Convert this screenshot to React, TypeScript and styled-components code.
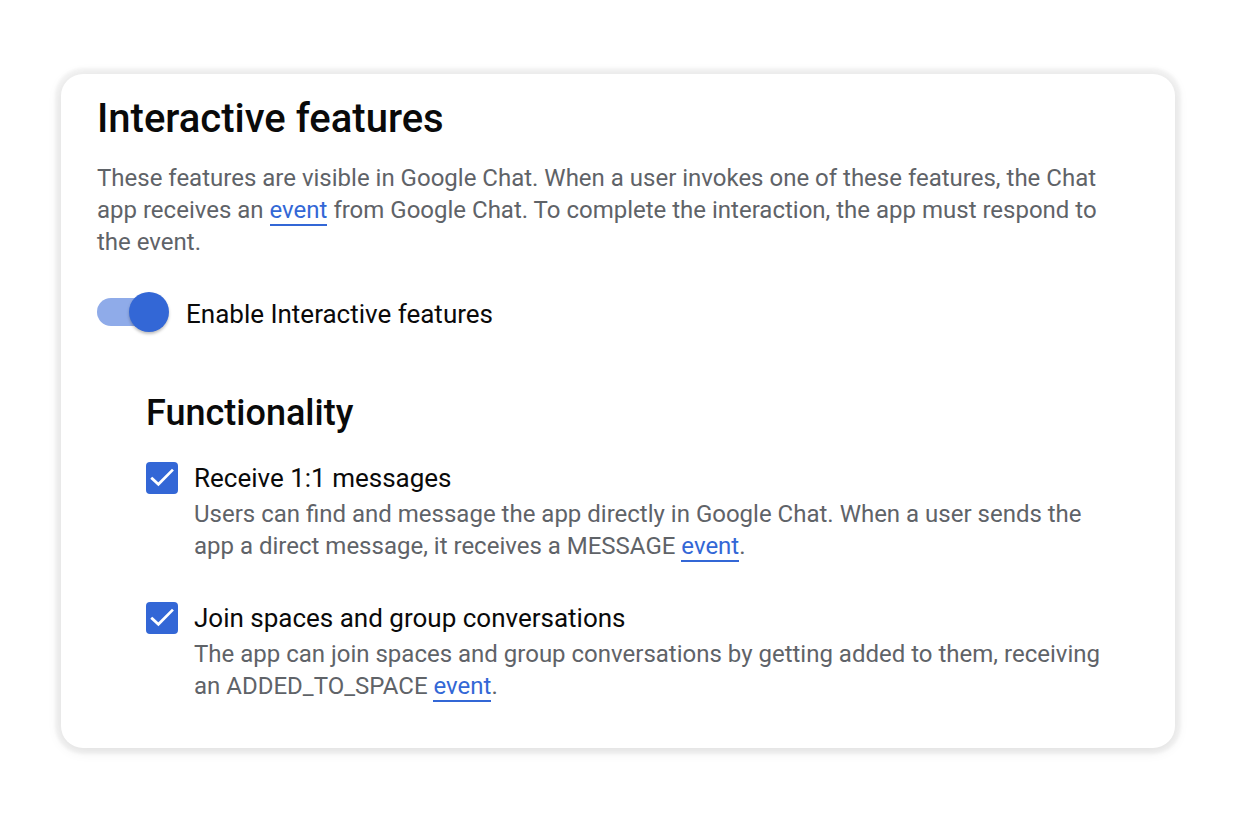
import React from "react";
import styled, { createGlobalStyle } from "styled-components";

const Global = createGlobalStyle`
  html, body { margin: 0; padding: 0; background: #ffffff; }
  body { font-family: Roboto, "Noto Sans", Arial, sans-serif; -webkit-font-smoothing: antialiased; }
`;

const Page = styled.div`
  width: 1243px;
  height: 815px;
  box-sizing: border-box;
  padding: 74px 0 0 61px;
`;

const Card = styled.section`
  width: 1114px;
  height: 674px;
  box-sizing: border-box;
  background: #fff;
  border-radius: 22px;
  box-shadow: 0 0 3px 6px rgba(0, 0, 0, 0.04), 0 2px 14px rgba(0, 0, 0, 0.1);
  padding: 21px 36px 0 36px;
`;

const Title = styled.h1`
  margin: 0;
  font-size: 40px;
  line-height: 48px;
  font-weight: 500;
  color: #0a0a0a;
`;

const Body = styled.p`
  margin: 0;
  font-size: 24px;
  line-height: 32px;
  color: #5f6368;
  font-weight: 400;
`;

const Intro = styled(Body)`
  margin-top: 19px;
`;

const Link = styled.a`
  color: #3367d6;
  text-decoration: none;
  border-bottom: 2px solid #3367d6;
`;

const ToggleRow = styled.label`
  display: flex;
  align-items: center;
  gap: 17px;
  margin-top: 34px;
  font-size: 26px;
  line-height: 32px;
  color: #0a0a0a;
`;

const ToggleText = styled.span`
  padding-top: 3px;
`;

const Switch = styled.span`
  position: relative;
  width: 72px;
  height: 40px;
  display: inline-block;
  flex: none;
`;

const Track = styled.span`
  position: absolute;
  left: 0;
  top: 6px;
  width: 60px;
  height: 28px;
  border-radius: 14px;
  background: #8fabe9;
`;

const Thumb = styled.span`
  position: absolute;
  left: 32px;
  top: 0;
  width: 40px;
  height: 40px;
  border-radius: 50%;
  background: #3367d6;
  box-shadow: 0 2px 3px rgba(0, 0, 0, 0.25);
`;

const Section = styled.div`
  padding-left: 49px;
  margin-top: 59px;
`;

const SubTitle = styled.h2`
  margin: 0;
  font-size: 36px;
  line-height: 44px;
  font-weight: 500;
  color: #0a0a0a;
`;

const List = styled.div`
  display: flex;
  flex-direction: column;
  gap: 40px;
  margin-top: 27px;
`;

const Item = styled.div`
  display: grid;
  grid-template-columns: 32px 1fr;
  column-gap: 16px;
`;

const Box = styled.span`
  width: 32px;
  height: 32px;
  border-radius: 4px;
  background: #3367d6;
  display: flex;
  align-items: center;
  justify-content: center;
`;

const ItemText = styled.div`
  display: flex;
  flex-direction: column;
  gap: 4px;
`;

const ItemLabel = styled.div`
  font-size: 26px;
  line-height: 32px;
  color: #0a0a0a;
`;

const Check = () => (
  <svg width="24" height="24" viewBox="0 0 24 24" fill="none">
    <path d="M2.2 12.6 L8.4 18.3 L22 4.6" stroke="#fff" strokeWidth="2.7" strokeLinecap="square" />
  </svg>
);

export default function App() {
  return (
    <>
      <Global />
      <Page>
        <Card>
          <Title>Interactive features</Title>
          <Intro>
            These features are visible in Google Chat. When a user invokes one of these features, the Chat
            <br />
            app receives an <Link>event</Link> from Google Chat. To complete the interaction, the app must respond to
            <br />
            the event.
          </Intro>
          <ToggleRow>
            <Switch>
              <Track />
              <Thumb />
            </Switch>
            <ToggleText>Enable Interactive features</ToggleText>
          </ToggleRow>
          <Section>
            <SubTitle>Functionality</SubTitle>
            <List>
              <Item>
                <Box><Check /></Box>
                <ItemText>
                  <ItemLabel>Receive 1:1 messages</ItemLabel>
                  <Body>
                    Users can find and message the app directly in Google Chat. When a user sends the
                    <br />
                    app a direct message, it receives a MESSAGE <Link>event</Link>.
                  </Body>
                </ItemText>
              </Item>
              <Item>
                <Box><Check /></Box>
                <ItemText>
                  <ItemLabel>Join spaces and group conversations</ItemLabel>
                  <Body>
                    The app can join spaces and group conversations by getting added to them, receiving
                    <br />
                    an ADDED_TO_SPACE <Link>event</Link>.
                  </Body>
                </ItemText>
              </Item>
            </List>
          </Section>
        </Card>
      </Page>
    </>
  );
}
